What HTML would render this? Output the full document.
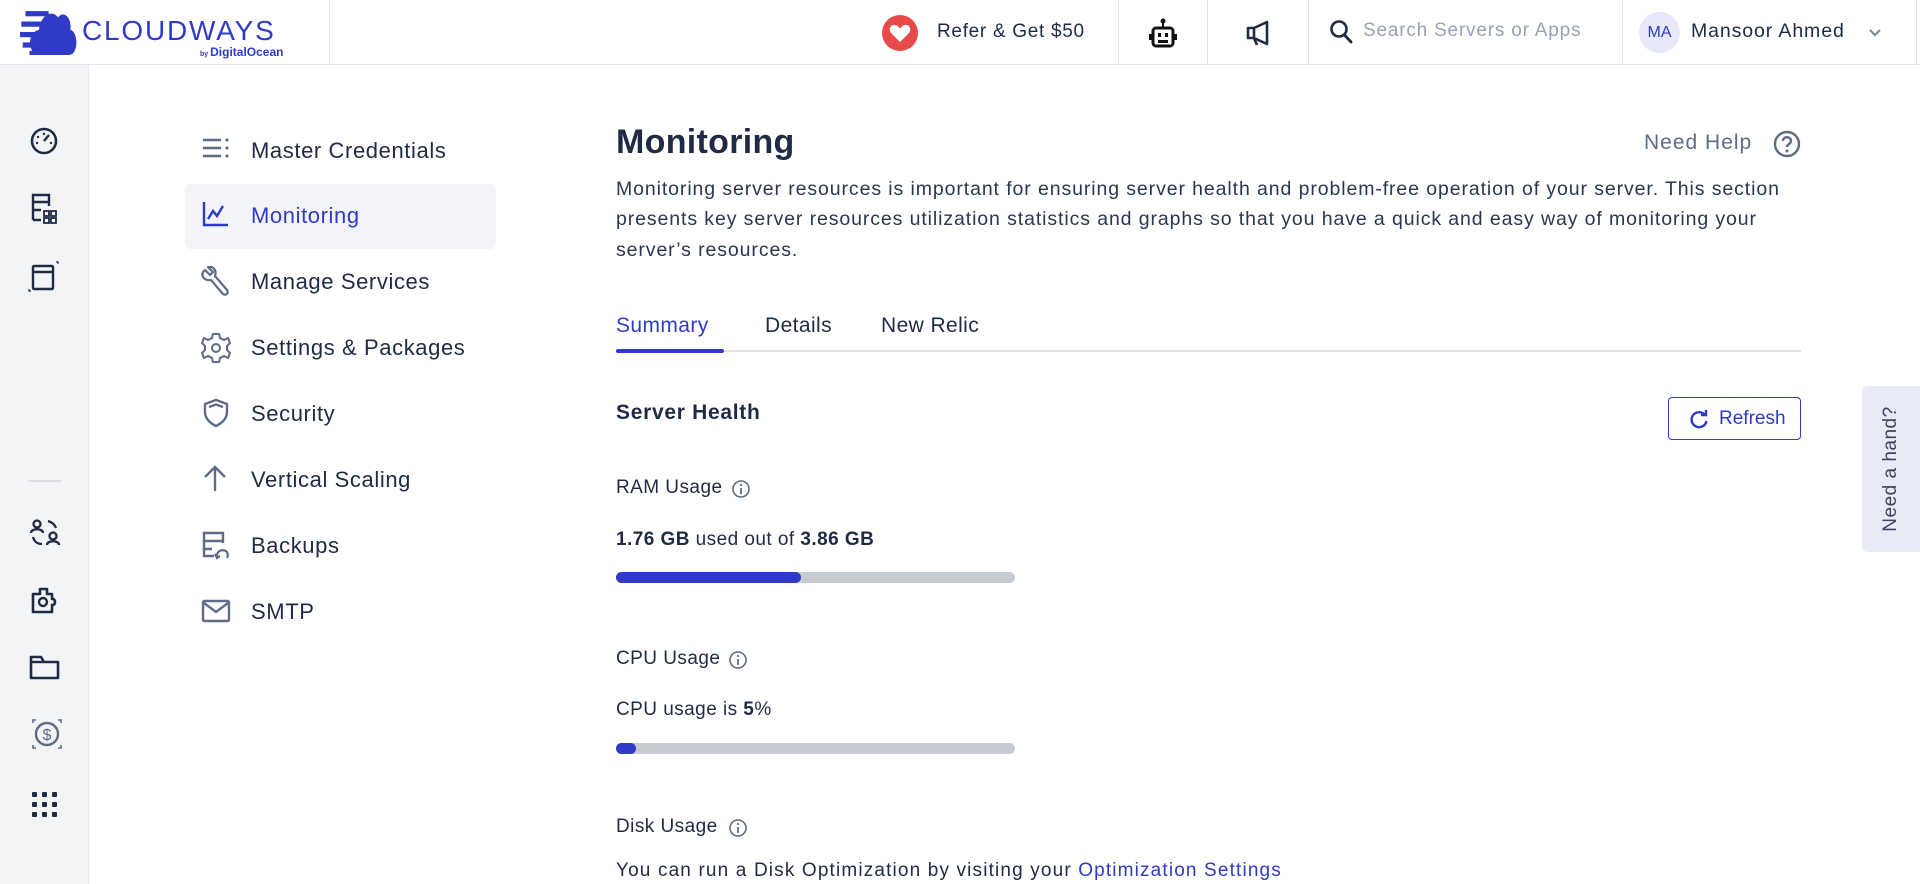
<!DOCTYPE html>
<html><head><meta charset="utf-8"><style>
*{margin:0;padding:0;box-sizing:border-box}
body{width:1920px;height:884px;overflow:hidden;background:#fff;font-family:"Liberation Sans",sans-serif;color:#1f2a44;position:relative}
.a{position:absolute;white-space:nowrap}
.hdr{position:absolute;left:0;top:0;width:1920px;height:65px;border-bottom:1px solid #e2e4e9;background:#fff}
.vd{position:absolute;top:0;width:1px;height:65px;background:#e2e4e9}
.rail{position:absolute;left:0;top:65px;width:89px;height:819px;background:#f3f4f6;border-right:1px solid #e8e9ed}
.nav{font-size:22px;color:#1f2a44;letter-spacing:0.6px}
.nav svg{position:absolute;left:-50px;top:-3px}
p.t{font-size:19.5px;letter-spacing:0.9px;color:#2b3650}
.ls{letter-spacing:0.45px}
</style></head><body>
<div class="hdr">
 <svg class="a" style="left:20px;top:9px" width="60" height="47" viewBox="0 0 88 45" preserveAspectRatio="none">
  <path d="M30 44 C10 44 10 22 28 20 C30 6 46 0 56 8 C62 2 76 6 74 20 C86 22 86 44 72 44 Z" fill="#2f3bc6"/>
  <rect x="8" y="2" width="34" height="5" fill="#2f3bc6"/><rect x="2" y="12" width="36" height="5" fill="#2f3bc6"/>
  <rect x="0" y="22" width="26" height="5" fill="#2f3bc6"/><rect x="4" y="32" width="22" height="5" fill="#2f3bc6"/><rect x="14" y="40" width="20" height="4" fill="#2f3bc6"/>
 </svg>
 <div class="a" style="left:82px;top:15px;font-size:28px;color:#2f3bc6;letter-spacing:1.8px">CLOUDWAYS</div>
 <div class="a" style="left:200px;top:45px;font-size:12px;color:#2f3bc6;font-weight:bold"><span style="font-size:7px">by </span>DigitalOcean</div>
 <div class="vd" style="left:329px"></div>
 <svg class="a" style="left:881px;top:14px" width="38" height="38" viewBox="0 0 38 38"><circle cx="19" cy="19" r="18" fill="#e84a4a"/><path d="M19 28 L10 19 C7 15 10 10 14 11 C16 11 18 13 19 15 C20 13 22 11 24 11 C28 10 31 15 28 19 Z" fill="#fff"/></svg>
 <div class="a" style="left:937px;top:21px;font-size:19px;letter-spacing:0.7px">Refer &amp; Get $50</div>
 <div class="vd" style="left:1118px"></div>
 <svg class="a" style="left:1148px;top:18px" width="30" height="32" viewBox="0 0 30 32"><circle cx="15" cy="3" r="2.5" fill="#111"/><rect x="14" y="4" width="2" height="6" fill="#111"/><rect x="5" y="10" width="20" height="18" rx="3" fill="none" stroke="#111" stroke-width="3"/><rect x="1" y="16" width="4" height="6" fill="#111"/><rect x="25" y="16" width="4" height="6" fill="#111"/><rect x="10" y="15" width="3" height="4" fill="#111"/><rect x="17" y="15" width="3" height="4" fill="#111"/><rect x="10" y="22" width="10" height="3" fill="#111"/></svg>
 <div class="vd" style="left:1207px"></div>
 <svg class="a" style="left:1245px;top:20px" width="28" height="26" viewBox="0 0 28 26"><path d="M3 8 H9 L22 2 V24 L9 18 H3 Z M9 8 V18 M9 18 L12 25" fill="none" stroke="#1f2a44" stroke-width="2.6" stroke-linejoin="round"/></svg>
 <div class="vd" style="left:1308px"></div>
 <svg class="a" style="left:1329px;top:19px" width="24" height="26" viewBox="0 0 24 26"><circle cx="10" cy="10" r="7.5" fill="none" stroke="#1f2a44" stroke-width="2.6"/><path d="M15.5 16 L22 23" stroke="#1f2a44" stroke-width="2.8" stroke-linecap="round"/></svg>
 <div class="a" style="left:1363px;top:20px;font-size:19px;color:#9aa1b1;letter-spacing:0.8px">Search Servers or Apps</div>
 <div class="vd" style="left:1622px"></div>
 <div class="a" style="left:1639px;top:12px;width:41px;height:41px;border-radius:50%;background:#e7e8f8;color:#2f3bc6;font-size:16px;text-align:center;line-height:41px">MA</div>
 <div class="a" style="left:1691px;top:20px;font-size:19.5px;letter-spacing:0.9px">Mansoor Ahmed</div>
 <svg class="a" style="left:1868px;top:28px" width="14" height="10" viewBox="0 0 14 10"><path d="M2 2 L7 7 L12 2" fill="none" stroke="#7a8296" stroke-width="2"/></svg>
 <div class="vd" style="left:1916px"></div>
</div>
<div class="rail">
 <svg class="a" style="left:30px;top:62px" width="28" height="28" viewBox="0 0 28 28"><circle cx="14" cy="14" r="12" fill="none" stroke="#1f2a44" stroke-width="2.6"/><path d="M14 14 L19 8" stroke="#1f2a44" stroke-width="2.4"/><circle cx="14" cy="7" r="1.2" fill="#1f2a44"/><circle cx="8" cy="10" r="1.2" fill="#1f2a44"/><circle cx="7" cy="16" r="1.2" fill="#1f2a44"/><circle cx="21" cy="16" r="1.2" fill="#1f2a44"/></svg>
 <svg class="a" style="left:30px;top:127px" width="30" height="32" viewBox="0 0 30 32"><path d="M3 28 V3 H19 V14 M3 10 H19 M3 18 H11 M3 28 H11" fill="none" stroke="#1f2a44" stroke-width="2.4"/><rect x="14" y="19" width="5" height="5" fill="none" stroke="#1f2a44" stroke-width="1.8"/><rect x="21" y="19" width="5" height="5" fill="none" stroke="#1f2a44" stroke-width="1.8"/><rect x="14" y="26" width="5" height="5" fill="none" stroke="#1f2a44" stroke-width="1.8"/><rect x="21" y="26" width="5" height="5" fill="none" stroke="#1f2a44" stroke-width="1.8"/></svg>
 <svg class="a" style="left:28px;top:196px" width="32" height="32" viewBox="0 0 32 32"><rect x="5" y="5" width="20" height="23" rx="1" fill="none" stroke="#1f2a44" stroke-width="2.4"/><path d="M5 11 H25" stroke="#1f2a44" stroke-width="2.4"/><path d="M28 1 H30 V3 M1 28 V30 H3" fill="none" stroke="#1f2a44" stroke-width="1.2"/></svg>
 <div class="a" style="left:28px;top:415px;width:33px;height:2px;background:#dcdee4"></div>
 <svg class="a" style="left:29px;top:454px" width="32" height="30" viewBox="0 0 32 30"><circle cx="8" cy="5" r="3.5" fill="none" stroke="#1f2a44" stroke-width="2.3"/><path d="M2 14 C2 9 14 9 14 14" fill="none" stroke="#1f2a44" stroke-width="2.3"/><circle cx="24" cy="17" r="3.5" fill="none" stroke="#1f2a44" stroke-width="2.3"/><path d="M18 26 C18 21 30 21 30 26" fill="none" stroke="#1f2a44" stroke-width="2.3"/><path d="M19 2 C23 3 26 6 27 9 M4 18 C5 22 8 25 13 25" fill="none" stroke="#1f2a44" stroke-width="2.3"/></svg>
 <svg class="a" style="left:30px;top:520px" width="32" height="30" viewBox="0 0 32 30"><path d="M3 9 H10 V4 H17 V9 H22 V14 C26 13 26 21 22 20 V27 H3 Z" fill="none" stroke="#1f2a44" stroke-width="2.6" stroke-linejoin="round"/><circle cx="13" cy="17" r="4" fill="none" stroke="#1f2a44" stroke-width="2.4"/></svg>
 <svg class="a" style="left:29px;top:589px" width="32" height="28" viewBox="0 0 32 28"><path d="M2 4 V24 H29 V8 H15 L12 3 H2 Z" fill="none" stroke="#1f2a44" stroke-width="2.6" stroke-linejoin="round"/><path d="M2 8 H15" stroke="#1f2a44" stroke-width="2.4"/></svg>
 <svg class="a" style="left:32px;top:654px" width="30" height="30" viewBox="0 0 30 30"><circle cx="15" cy="15" r="11" fill="none" stroke="#5f6b85" stroke-width="2.4"/><text x="15" y="21" font-size="16" text-anchor="middle" fill="#5f6b85" font-family="Liberation Sans">$</text><path d="M1 4 V1 H4 M26 1 H29 V4 M1 26 V29 H4 M29 26 V29 H26" fill="none" stroke="#5f6b85" stroke-width="1.6"/></svg>
 <svg class="a" style="left:31px;top:726px" width="28" height="28" viewBox="0 0 28 28"><g fill="#1f2a44"><rect x="1" y="1" width="5" height="5" rx="1"/><rect x="11" y="1" width="5" height="5" rx="1"/><rect x="21" y="1" width="5" height="5" rx="1"/><rect x="1" y="11" width="5" height="5" rx="1"/><rect x="11" y="11" width="5" height="5" rx="1"/><rect x="21" y="11" width="5" height="5" rx="1"/><rect x="1" y="21" width="5" height="5" rx="1"/><rect x="11" y="21" width="5" height="5" rx="1"/><rect x="21" y="21" width="5" height="5" rx="1"/></g></svg>
</div>

<div class="a" style="left:185px;top:184px;width:311px;height:65px;background:#f3f4f9;border-radius:6px"></div>
<div class="a nav" style="left:251px;top:138px"><svg width="30" height="28" viewBox="0 0 30 28"><path d="M2 5 H20 M2 13 H20 M2 21 H20" stroke="#5f6b85" stroke-width="2.4"/><circle cx="26" cy="5" r="1.6" fill="#5f6b85"/><circle cx="26" cy="13" r="1.6" fill="#5f6b85"/><circle cx="26" cy="21" r="1.6" fill="#5f6b85"/></svg>Master Credentials</div>
<div class="a nav" style="left:251px;top:203px;color:#2f3bc6"><svg width="30" height="28" viewBox="0 0 30 28"><path d="M3 2 V25 H27 M7 19 L12 11 L16 16 L22 6" fill="none" stroke="#2f3bc6" stroke-width="2.4"/></svg>Monitoring</div>
<div class="a nav" style="left:251px;top:269px"><svg width="30" height="32" viewBox="0 0 30 32"><path d="M4 4 L9 9 L12 6 L7 1 C12 0 16 4 14 10 L26 24 C28 27 25 30 22 28 L10 14 C4 15 0 11 2 6 Z" fill="none" stroke="#5f6b85" stroke-width="2.2" stroke-linejoin="round"/></svg>Manage Services</div>
<div class="a nav" style="left:251px;top:335px"><svg width="30" height="32" viewBox="0 0 30 32"><path d="M12 2 H18 L19 6 L23 8 L27 6 L29 11 L26 14 V18 L29 21 L27 26 L23 24 L19 26 L18 30 H12 L11 26 L7 24 L3 26 L1 21 L4 18 V14 L1 11 L3 6 L7 8 L11 6 Z" fill="none" stroke="#5f6b85" stroke-width="2"/><circle cx="15" cy="16" r="4" fill="none" stroke="#5f6b85" stroke-width="2"/></svg>Settings &amp; Packages</div>
<div class="a nav" style="left:251px;top:401px"><svg width="30" height="30" viewBox="0 0 30 30"><path d="M15 2 L26 6 V14 C26 21 21 25 15 28 C9 25 4 21 4 14 V6 Z M8 9 L15 6.5 L22 9" fill="none" stroke="#5f6b85" stroke-width="2.4" stroke-linejoin="round"/></svg>Security</div>
<div class="a nav" style="left:251px;top:467px"><svg width="30" height="30" viewBox="0 0 30 30"><path d="M14 27 V4 M4 13 L14 3 L24 13" fill="none" stroke="#5f6b85" stroke-width="2.4"/></svg>Vertical Scaling</div>
<div class="a nav" style="left:251px;top:533px"><svg width="30" height="32" viewBox="0 0 30 32"><path d="M13 26 H3 V3 H22 V13 M3 11 H22 M3 19 H11" fill="none" stroke="#5f6b85" stroke-width="2.4"/><path d="M16 27 C15 21 22 18 26 22 C27 24 27 26 26 28 M14 24 L16 28 L19 26" fill="none" stroke="#5f6b85" stroke-width="2.2"/></svg>Backups</div>
<div class="a nav" style="left:251px;top:599px"><svg width="30" height="30" viewBox="0 0 30 30"><rect x="2" y="5" width="26" height="20" rx="1.5" fill="none" stroke="#5f6b85" stroke-width="2.4"/><path d="M3 7 L15 16 L27 7" fill="none" stroke="#5f6b85" stroke-width="2.4"/></svg>SMTP</div>

<div class="a" style="left:616px;top:123px;font-size:34px;font-weight:bold;color:#1f2a44;letter-spacing:0.3px">Monitoring</div>
<div class="a" style="left:1644px;top:131px;font-size:21px;color:#5f6b85;letter-spacing:1px">Need Help</div>
<svg class="a" style="left:1773px;top:130px" width="28" height="28" viewBox="0 0 28 28"><circle cx="14" cy="14" r="12" fill="none" stroke="#5f6b85" stroke-width="2.4"/><path d="M10 11 C10 6 18 6 18 11 C18 14 14 14 14 17" fill="none" stroke="#5f6b85" stroke-width="2.4"/><circle cx="14" cy="21" r="1.5" fill="#5f6b85"/></svg>
<p class="a t" style="left:616px;top:178px">Monitoring server resources is important for ensuring server health and problem-free operation of your server. This section</p>
<p class="a t" style="left:616px;top:208px">presents key server resources utilization statistics and graphs so that you have a quick and easy way of monitoring your</p>
<p class="a t" style="left:616px;top:239px">server’s resources.</p>

<div class="a" style="left:616px;top:314px;font-size:21px;color:#2f3bc6;letter-spacing:0.4px">Summary</div>
<div class="a" style="left:765px;top:314px;font-size:21px;letter-spacing:0.4px">Details</div>
<div class="a" style="left:881px;top:314px;font-size:21px;letter-spacing:0.4px">New Relic</div>
<div class="a" style="left:616px;top:350px;width:1185px;height:2px;background:#e2e4ea"></div>
<div class="a" style="left:616px;top:349px;width:108px;height:4px;background:#2f3bc6;border-radius:2px"></div>

<div class="a" style="left:616px;top:401px;font-size:21px;font-weight:bold;letter-spacing:0.7px">Server Health</div>
<div class="a" style="left:1668px;top:397px;width:133px;height:43px;border:1px solid #2f3bc6;border-radius:4px;color:#2f3bc6;font-size:19px;line-height:41px;padding-left:50px">Refresh
 <svg style="position:absolute;left:20px;top:12px" width="20" height="20" viewBox="0 0 20 20"><path d="M16 5 A7.5 7.5 0 1 0 17.5 11" fill="none" stroke="#2f3bc6" stroke-width="2.4"/><path d="M12 5 H17 V0" fill="none" stroke="#2f3bc6" stroke-width="2.4"/></svg></div>

<div class="a ls" style="left:616px;top:477px;font-size:19px">RAM Usage</div>
<svg class="a" style="left:731px;top:479px" width="20" height="20" viewBox="0 0 20 20"><circle cx="10" cy="10" r="8" fill="none" stroke="#5f6b85" stroke-width="1.6"/><path d="M10 9 V15" stroke="#5f6b85" stroke-width="1.8"/><circle cx="10" cy="6" r="1.1" fill="#5f6b85"/></svg>
<div class="a ls" style="left:616px;top:529px;font-size:19px"><b>1.76 GB</b> used out of <b>3.86 GB</b></div>
<div class="a" style="left:616px;top:572px;width:399px;height:11px;background:#c6cad2;border-radius:6px"><div style="width:185px;height:11px;background:#2f3bc6;border-radius:6px"></div></div>

<div class="a ls" style="left:616px;top:648px;font-size:19px">CPU Usage</div>
<svg class="a" style="left:728px;top:650px" width="20" height="20" viewBox="0 0 20 20"><circle cx="10" cy="10" r="8" fill="none" stroke="#5f6b85" stroke-width="1.6"/><path d="M10 9 V15" stroke="#5f6b85" stroke-width="1.8"/><circle cx="10" cy="6" r="1.1" fill="#5f6b85"/></svg>
<div class="a ls" style="left:616px;top:699px;font-size:19px">CPU usage is <b>5</b>%</div>
<div class="a" style="left:616px;top:743px;width:399px;height:11px;background:#c6cad2;border-radius:6px"><div style="width:20px;height:11px;background:#2f3bc6;border-radius:6px"></div></div>

<div class="a ls" style="left:616px;top:816px;font-size:19px">Disk Usage</div>
<svg class="a" style="left:728px;top:818px" width="20" height="20" viewBox="0 0 20 20"><circle cx="10" cy="10" r="8" fill="none" stroke="#5f6b85" stroke-width="1.6"/><path d="M10 9 V15" stroke="#5f6b85" stroke-width="1.8"/><circle cx="10" cy="6" r="1.1" fill="#5f6b85"/></svg>
<div class="a" style="left:616px;top:860px;font-size:19px;letter-spacing:1.15px">You can run a Disk Optimization by visiting your <span style="color:#2f3bc6">Optimization Settings</span></div>

<div class="a" style="left:1862px;top:386px;width:58px;height:166px;background:#e8eaf5;border-radius:6px 0 0 6px"></div>
<div class="a" style="left:1891px;top:469px;transform:translate(-50%,-50%) rotate(-90deg);font-size:19px;color:#3b4660;letter-spacing:0.5px">Need a hand?</div>
</body></html>
